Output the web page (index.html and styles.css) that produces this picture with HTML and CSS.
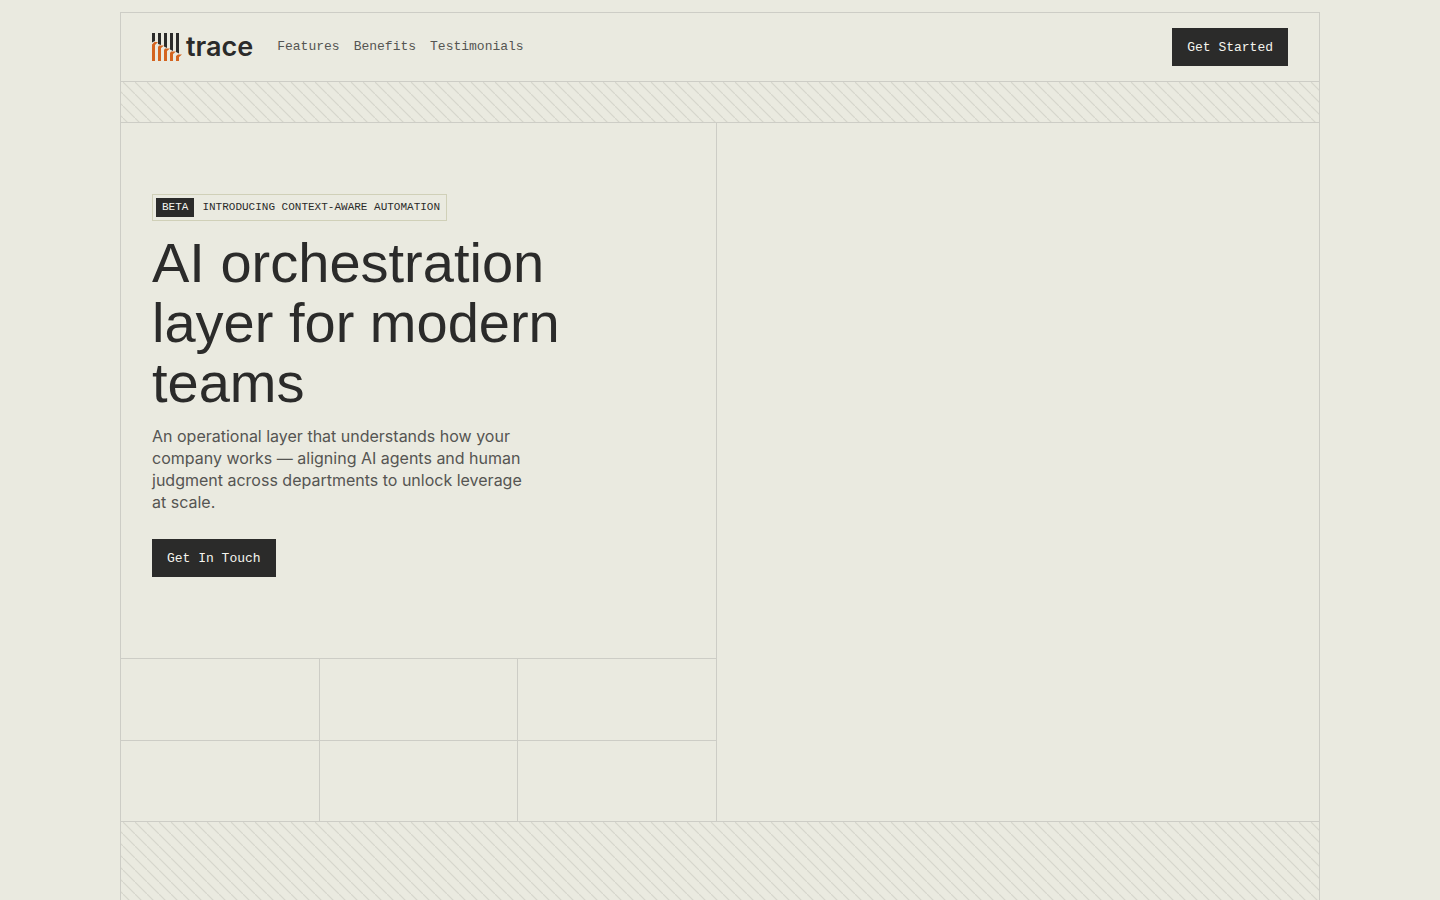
FILE: index.html
```html
<!DOCTYPE html>
<html lang="en">

<head>
    <meta charset="UTF-8">
    <meta name="viewport" content="width=device-width, initial-scale=1.0">
    <title>trace</title>
    <link rel="stylesheet" href="styles.css">
</head>

<body>
    <div class="page">
        <header class="header">
            <a class="logo" href="#">
                <svg class="logo-mark" viewBox="0 0 30 28" aria-hidden="true">
                    <g fill="#2b2b2a">
                        <path d="M0 0h3v8L0 9.500z" />
                        <path d="M6 0h3v12L6 11z" />
                        <path d="M12 0h3v15L12 13.500z" />
                        <path d="M18 0h3v18L18 16.500z" />
                        <path d="M24 0h3v20.500L24 19z" />
                    </g>
                    <g fill="#d4641f">
                        <path d="M0 11.500L2.500 9H6L3 12v16H0z" />
                        <path d="M6 14L7 12.500H12L9 15v13H6z" />
                        <path d="M12 17L13 15.500H18L15 18v10H12z" />
                        <path d="M18 20L19 18.500H24L21 21v7H18z" />
                        <path d="M24 23L26 21.500H30L27 24v4H24z" />
                    </g>
                </svg>
                <span class="logo-text">trace</span>
            </a>
            <nav class="nav">
                <a href="#features">Features</a>
                <a href="#benefits">Benefits</a>
                <a href="#testimonials">Testimonials</a>
            </nav>
            <button class="btn" type="button">Get Started</button>
        </header>

        <div class="stripes"></div>

        <main class="hero">
            <div class="hero-left">
                <section class="intro">
                    <div class="badge">
                        <span class="badge-tag">BETA</span>
                        <span>INTRODUCING CONTEXT-AWARE AUTOMATION</span>
                    </div>
                    <h1 class="title">AI orchestration layer for modern teams</h1>
                    <p class="text">An operational layer that understands how your company works — aligning AI agents and human judgment across departments to unlock leverage at scale.</p>
                    <button class="btn" type="button">Get In Touch</button>
                </section>
                <div class="cells">
                    <div class="cell"></div>
                    <div class="cell"></div>
                    <div class="cell"></div>
                    <div class="cell"></div>
                    <div class="cell"></div>
                    <div class="cell"></div>
                </div>
            </div>
            <div class="hero-right"></div>
        </main>

        <div class="stripes stripes-fill"></div>
    </div>
</body>

</html>
```
FILE: styles.css
```css
:root {
    --bg: #eaeae0;
    --line: #cdcdc6;
    --stripe: #d6d6cd;
    --dark: #2b2b2a;
    --mono: "Liberation Mono", monospace;
}

* {
    box-sizing: border-box;
}

body {
    margin: 0;
    padding: 12px 24px 0;
    min-height: 100vh;
    display: flex;
    justify-content: center;
    background: var(--bg);
    color: var(--dark);
    font-family: Inter, sans-serif;
}

.page {
    width: 100%;
    max-width: 1200px;
    display: flex;
    flex-direction: column;
    border: 1px solid var(--line);
    border-bottom: 0;
}

.header {
    display: flex;
    align-items: center;
    padding: 15px 31px;
    border-bottom: 1px solid var(--line);
}

.logo {
    display: flex;
    align-items: center;
    gap: 4px;
    color: var(--dark);
    text-decoration: none;
}

.logo-mark {
    width: 30px;
    height: 28px;
}

.logo-text {
    font-size: 27px;
    line-height: 28px;
    font-weight: 600;
}

.nav {
    display: flex;
    gap: 14px;
    margin-left: 24px;
    margin-right: auto;
}

.nav a {
    color: #555552;
    font-family: var(--mono);
    font-size: 13px;
    line-height: 20px;
    text-decoration: none;
}

.btn {
    padding: 10px 15px 8px;
    border: 0;
    background: var(--dark);
    color: #f5f5ee;
    font-family: var(--mono);
    font-size: 13px;
    line-height: 20px;
    cursor: pointer;
}

.stripes {
    height: 41px;
    border-bottom: 1px solid var(--line);
    background-image: linear-gradient(45deg, transparent 44%, var(--stripe) 49%, var(--stripe) 51%, transparent 56%);
    background-size: 12px 12px;
    background-position: 2px 0;
}

.stripes-fill {
    flex: 1;
    border-bottom: 0;
}

.hero {
    display: grid;
    grid-template-columns: 99fr 100fr;
    border-bottom: 1px solid var(--line);
}

.hero-left {
    border-right: 1px solid var(--line);
}

.intro {
    padding: 71px 31px 81px;
}

.badge {
    width: fit-content;
    display: flex;
    align-items: center;
    gap: 8px;
    padding: 3px 6px 3px 3px;
    border: 1px solid #d0d0b8;
    font-family: var(--mono);
    font-size: 11px;
    line-height: 19px;
}

.badge-tag {
    padding: 0 6px;
    background: var(--dark);
    color: #f5f5ee;
}

.title {
    max-width: 440px;
    margin: 12px 0;
    font-family: "Liberation Sans", sans-serif;
    font-size: 56px;
    line-height: 60px;
    font-weight: 400;
}

.text {
    max-width: 370px;
    margin: 0 0 26px;
    color: #555552;
    font-size: 16px;
    line-height: 22px;
}

/* the gaps show the line colour between the cells */
.cells {
    height: 163px;
    display: grid;
    grid-template-columns: repeat(3, 1fr);
    grid-template-rows: repeat(2, 1fr);
    gap: 1px;
    border-top: 1px solid var(--line);
    background: var(--line);
}

.cell {
    background: var(--bg);
}

@media (max-width: 800px) {
    .hero {
        grid-template-columns: 1fr;
    }

    .hero-left {
        border-right: 0;
    }

    .nav {
        display: none;
    }

    .header {
        justify-content: space-between;
    }
}
```
